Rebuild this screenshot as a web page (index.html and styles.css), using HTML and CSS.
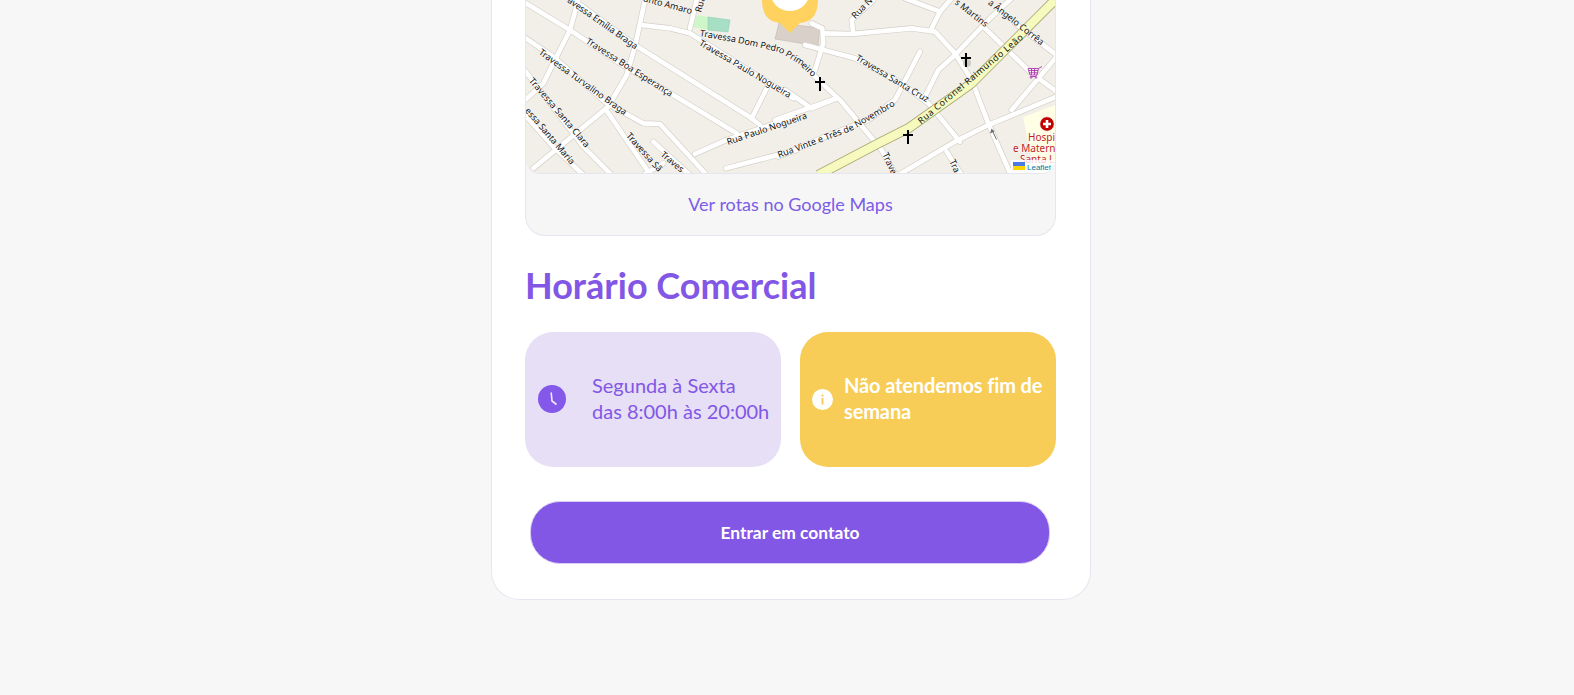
FILE: index.html
```html
<!DOCTYPE html>
<html lang="pt-BR">
<head>
<meta charset="utf-8">
<title>Horário Comercial</title>
<link rel="stylesheet" href="styles.css">
</head>
<body>
<main class="card">
  <section class="map-box">
    <svg class="map" viewBox="526 0 529 173" width="529" height="173" xmlns="http://www.w3.org/2000/svg">
      <defs>
        <g id="roads-left">
          <path d="M10 5L150 90L300 190L460 285L650 400"/>
          <path d="M120 -30L345 135L695 355L720 375"/>
          <path d="M375 0L345 140L320 225L265 320L40 505"/>
          <path d="M530 0L510 85"/>
          <path d="M365 75L450 85L510 100L700 220L820 295"/>
          <path d="M10 110L100 170L260 310L370 370L420 372L560 525"/>
          <path d="M175 0L150 90L100 190L70 250L10 305"/>
          <path d="M262 335L395 530"/>
          <path d="M10 205L190 440L275 525"/>
          <path d="M10 340L100 440L190 525"/>
          <path d="M370 525L430 490"/>
          <path d="M400 425L510 525"/>
          <path d="M745 255L695 355"/>
          <path d="M525 462L620 420L820 352"/>
          <path d="M618 505L830 450"/>
        </g>
        <g id="roads-right">
          <path d="M60 135L210 175L350 250L430 310L525 425"/>
          <path d="M115 100L200 102L380 85L450 95L510 160L560 240L610 370L680 530"/>
          <path d="M80 70L112 85L115 130L85 225L170 305L290 450L335 530"/>
          <path d="M205 100L200 60L265 0"/>
          <path d="M440 85L465 35L360 -5"/>
          <path d="M465 35L500 -5"/>
          <path d="M420 290L460 210L510 165L620 50L680 -5"/>
          <path d="M600 85L740 220L815 275"/>
          <path d="M690 70L815 165"/>
          <path d="M815 170L680 330"/>
          <path d="M340 525L510 425L610 375L815 290"/>
          <path d="M155 295L80 325L0 270"/>
          <path d="M-30 360L155 295"/>
          <path d="M-20 470L120 410L250 360L330 300L405 155"/>
          <path d="M485 455L530 525"/>
        </g>
        <path id="road-major" d="M100 525L280 430L370 385L560 250L700 110L815 -5"/>
        <path id="label-dom-pedro" d="M700 33L740 40L780 49L800 61L816 76"/>
        <path id="label-vinte" d="M778 155L850 128L895 102"/>
        <g id="cross">
          <path d="M0 -7V7M-5 -2H5"/>
        </g>
      </defs>

      <rect class="land" x="526" y="0" width="529" height="173"/>
      <polygon class="hospital" points="1023,117 1056,105 1056,173 1035,173"/>
      <polygon class="grass" points="697,15 708,17 708,30 693,27"/>
      <polygon class="park" points="708,17 730,20 728,32 708,30"/>
      <polygon class="building" points="779,23 820,28 818,46 775,39"/>

      <g class="casing">
        <use href="#roads-left" transform="translate(520 0) scale(.3333)"/>
        <use href="#roads-right" transform="translate(785 0) scale(.3333)"/>
      </g>
      <g class="road">
        <use href="#roads-left" transform="translate(520 0) scale(.3333)"/>
        <use href="#roads-right" transform="translate(785 0) scale(.3333)"/>
      </g>
      <use class="major-casing" href="#road-major" transform="translate(785 0) scale(.3333)"/>
      <use class="major" href="#road-major" transform="translate(785 0) scale(.3333)"/>

      <g class="labels">
        <text class="end" transform="translate(637 47) rotate(35)" dy=".35em">avessa Emília Braga</text>
        <text transform="translate(587 40) rotate(32.6)" dy=".35em" textLength="101">Travessa Boa Esperança</text>
        <text transform="translate(540 51) rotate(35.8)" dy=".35em" textLength="106">Travessa Turvalino Braga</text>
        <text transform="translate(531 79) rotate(49.6)" dy=".35em" textLength="88">Travessa Santa Clara</text>
        <text transform="translate(527 109) rotate(49.5)" dy=".35em" textLength="71">essa Santa Maria</text>
        <text transform="translate(628 134) rotate(48)" dy=".35em">Travessa Sã</text>
        <text transform="translate(662 153) rotate(40)" dy=".35em">Traves</text>
        <text class="end" transform="translate(692 11) rotate(15)" dy=".35em">anto Amaro</text>
        <text transform="translate(698 12) rotate(-75)" dy=".35em">Rua</text>
        <text dy=".35em"><textPath href="#label-dom-pedro">Travessa Dom Pedro Primeiro</textPath></text>
        <text transform="translate(700 42) rotate(30.5)" dy=".35em" textLength="105">Travessa Paulo Nogueira</text>
        <text transform="translate(727 142) rotate(-18.6)" dy=".35em" textLength="84">Rua Paulo Nogueira</text>
        <text dy=".35em"><textPath href="#label-vinte">Rua Vinte e Três de Novembro</textPath></text>
        <text transform="translate(857 57) rotate(31)" dy=".35em" textLength="83">Travessa Santa Cruz</text>
        <text class="on-major" transform="translate(919 122) rotate(-40)" dy=".35em" textLength="134">Rua Coronel Raimundo Leão</text>
        <text transform="translate(853 17) rotate(-45)" dy=".35em">Rua N</text>
        <text class="end" transform="translate(987 25) rotate(38)" dy=".35em">s Martins</text>
        <text class="end" transform="translate(1043 43) rotate(38)" dy=".35em">a Ângelo Corrêa</text>
        <text transform="translate(885 153) rotate(65)" dy=".35em">Trave</text>
        <text transform="translate(952 160) rotate(65)" dy=".35em">Tra</text>
      </g>

      <circle class="grave" cx="967" cy="63" r="4"/>
      <g class="crosses">
        <use href="#cross" x="820" y="84"/>
        <use href="#cross" x="966" y="60"/>
        <use href="#cross" x="908" y="137"/>
      </g>

      <g class="cart">
        <path d="M1028 68.5H1038.5L1037 75H1030ZM1028.5 70.5H1038M1029 72.8H1037.5M1031.5 68.5V75M1034.5 68.5V75M1038.5 68.5L1042 66.5"/>
        <path d="M1037 75L1036 76.5H1030.5"/>
        <circle cx="1031" cy="77.5" r=".8"/>
        <circle cx="1036" cy="77.5" r=".8"/>
      </g>

      <path class="arrow-line" d="M996.5 139.5L992.5 131"/>
      <polygon class="arrow-head" points="991.5,128.5 990,133.5 994.5,131.5"/>

      <circle class="hosp-icon" cx="1047" cy="124" r="7.2"/>
      <path class="hosp-plus" d="M1043 124H1051M1047 120V128"/>
      <text class="hosp-label" x="1028" y="141">Hospi</text>
      <text class="hosp-label" x="1013" y="152">e Matern</text>
      <text class="hosp-label" x="1020" y="163">Santa L</text>

      <path class="pin" d="M762 -20V0C762 14 768 22 780 23L790 33L800 23C812 22 818 14 818 0V-20Z"/>
      <circle class="pin-dot" cx="790" cy="-9" r="20"/>

      <rect class="attrib" x="1011" y="160" width="45" height="13"/>
      <rect class="flag-blue" x="1013" y="162" width="12" height="4"/>
      <rect class="flag-yellow" x="1013" y="166" width="12" height="4"/>
      <text class="attrib-text" x="1027" y="170">Leaflet</text>
    </svg>
    <a class="route-link" href="#">Ver rotas no Google Maps</a>
  </section>

  <h2 class="title">Horário Comercial</h2>

  <div class="hours">
    <div class="hours-item hours-open">
      <svg class="icon-clock" viewBox="0 0 28 28" width="28" height="28" xmlns="http://www.w3.org/2000/svg">
        <circle class="icon-clock-face" cx="14" cy="14" r="14"/>
        <path class="icon-clock-hands" d="M13.2 7.5L14 16L18.5 19.5"/>
      </svg>
      <p class="hours-text">Segunda à Sexta<br>das 8:00h às 20:00h</p>
    </div>
    <div class="hours-item hours-closed">
      <svg class="icon-info" viewBox="0 0 21 21" width="21" height="21" xmlns="http://www.w3.org/2000/svg">
        <circle class="icon-info-face" cx="10.5" cy="10.5" r="10.5"/>
        <rect class="icon-info-mark" x="9.5" y="9" width="2" height="6.5"/>
        <rect class="icon-info-mark" x="9.5" y="5.5" width="2" height="2"/>
      </svg>
      <p class="hours-text hours-text-strong">Não atendemos fim de semana</p>
    </div>
  </div>

  <button class="contact" type="button">Entrar em contato</button>
</main>
</body>
</html>
```
FILE: styles.css
```css
* { box-sizing: border-box; }

html, body {
  margin: 0;
  height: 695px;
  overflow: hidden;
  background: #f7f7f7;
}

body {
  padding-left: 491px;
  font-family: "Lato", "Noto Sans", sans-serif;
  color: #8257e5;
}

.card {
  width: 600px;
  padding: 0 33px 35px;
  background: #fff;
  border: 1px solid #e6e6f0;
  border-top: 0;
  border-radius: 0 0 28px 28px;
}

.map-box {
  display: flex;
  flex-direction: column;
  width: 531px;
  background: #f6f6f7;
  border: 1px solid #e6e6f0;
  border-top: 0;
  border-radius: 0 0 20px 20px;
}

.map {
  display: block;
  border-radius: 0 0 14px 14px;
  box-shadow: 0 1px 0 #e6e6f0;
}

.land { fill: #f2efe9; }
.hospital { fill: #ffffe5; }
.grass { fill: #cdf7c9; }
.park { fill: #a7dfc5; stroke: #8fd0b4; stroke-width: .6; }
.building { fill: #d9d0c9; stroke: #bfb5ad; stroke-width: .6; }

.casing { fill: none; stroke: #d4d0c8; stroke-width: 18; stroke-linecap: round; stroke-linejoin: round; }
.road { fill: none; stroke: #fff; stroke-width: 14; stroke-linecap: round; stroke-linejoin: round; }
.major-casing { fill: none; stroke: #a9a873; stroke-width: 30; stroke-linejoin: round; }
.major { fill: none; stroke: #f7fabf; stroke-width: 25; stroke-linejoin: round; }

.labels text {
  font-family: "Noto Sans", sans-serif;
  font-size: 9px;
  fill: #111;
  stroke: #fff;
  stroke-width: 1.2px;
  stroke-opacity: .5;
  paint-order: stroke;
}

.labels .end { text-anchor: end; }
.labels .on-major { stroke: none; }

.crosses { fill: none; stroke: #000; stroke-width: 2; }
.grave { fill: #cfcbc6; }
.cart { fill: none; stroke: #ac39ac; stroke-width: .9; }
.arrow-line { fill: none; stroke: #6c6c6c; stroke-width: 1; }
.arrow-head { fill: #6c6c6c; }
.hosp-icon { fill: #c00000; stroke: #fff; stroke-width: .6; }
.hosp-plus { fill: none; stroke: #fff; stroke-width: 2.6; }

.hosp-label {
  font-family: "Noto Sans", sans-serif;
  font-size: 10px;
  fill: #c41c1c;
  stroke: #fff;
  stroke-width: 1.2px;
  stroke-opacity: .6;
  paint-order: stroke;
}

.pin { fill: #ffd25f; }
.pin-dot { fill: #fff; }

.attrib { fill: #fff; fill-opacity: .8; }
.flag-blue { fill: #4c7be1; }
.flag-yellow { fill: #ffd500; }
.attrib-text { font-family: "Liberation Sans", sans-serif; font-size: 8px; fill: #0078a8; }

.route-link {
  display: block;
  height: 62px;
  padding-top: 19px;
  text-align: center;
  font-size: 18px;
  line-height: 24px;
  color: #7c5ce8;
  text-decoration: none;
}

.title {
  margin: 26px 0 0;
  font-size: 36px;
  font-weight: 700;
  line-height: 46px;
  color: #8257e5;
}

.hours {
  display: grid;
  grid-template-columns: 256px 256px;
  column-gap: 19px;
  margin-top: 24px;
}

.hours-item {
  display: flex;
  align-items: center;
  height: 135px;
  padding: 0 0 1px 13px;
  border-radius: 28px;
}

.hours-open {
  background: #e6dff6;
  gap: 26px;
}

.hours-closed {
  background: #f7cd58;
  padding-left: 12px;
  gap: 11px;
  color: #fff;
}

.icon-clock, .icon-info { flex: none; display: block; }
.icon-clock-face { fill: #8458e8; }
.icon-clock-hands { fill: none; stroke: #f1ecff; stroke-width: 1.6; }
.icon-info-face { fill: #fff; }
.icon-info-mark { fill: #f7cd58; }

.hours-text {
  margin: 0 0 2px;
  font-size: 20px;
  line-height: 26px;
}

.hours-text-strong {
  font-weight: 700;
  letter-spacing: -.12px;
}

.contact {
  display: block;
  width: 520px;
  height: 63px;
  margin: 34px 0 0 5px;
  background: #8257e5;
  border: 1px solid #d9ccf7;
  border-radius: 30px;
  color: #fff;
  font-family: inherit;
  font-size: 17.4px;
  font-weight: 700;
}
```
